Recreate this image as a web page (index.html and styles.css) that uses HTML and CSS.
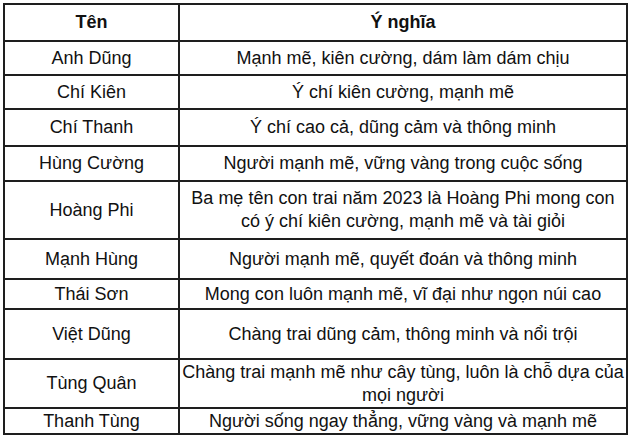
FILE: index.html
```html
<!DOCTYPE html>
<html lang="vi">
<head>
<meta charset="utf-8">
<link rel="stylesheet" href="styles.css">
</head>
<body>
<table class="names">
  <colgroup><col class="c-name"><col class="c-mean"></colgroup>
  <thead>
    <tr class="h37"><th>Tên</th><th>Ý nghĩa</th></tr>
  </thead>
  <tbody>
    <tr class="h34"><td>Anh Dũng</td><td>Mạnh mẽ, kiên cường, dám làm dám chịu</td></tr>
    <tr class="h34"><td>Chí Kiên</td><td>Ý chí kiên cường, mạnh mẽ</td></tr>
    <tr class="h37"><td>Chí Thanh</td><td>Ý chí cao cả, dũng cảm và thông minh</td></tr>
    <tr class="h35"><td>Hùng Cường</td><td>Người mạnh mẽ, vững vàng trong cuộc sống</td></tr>
    <tr class="h58"><td>Hoàng Phi</td><td>Ba mẹ tên con trai năm 2023 là Hoàng Phi mong con<br>có ý chí kiên cường, mạnh mẽ và tài giỏi</td></tr>
    <tr class="h40"><td>Mạnh Hùng</td><td>Người mạnh mẽ, quyết đoán và thông minh</td></tr>
    <tr class="h30"><td>Thái Sơn</td><td>Mong con luôn mạnh mẽ, vĩ đại như ngọn núi cao</td></tr>
    <tr class="h50"><td>Việt Dũng</td><td>Chàng trai dũng cảm, thông minh và nổi trội</td></tr>
    <tr class="h49"><td>Tùng Quân</td><td>Chàng trai mạnh mẽ như cây tùng, luôn là chỗ dựa của<br>mọi người</td></tr>
    <tr class="h26"><td>Thanh Tùng</td><td>Người sống ngay thẳng, vững vàng và mạnh mẽ</td></tr>
  </tbody>
</table>
</body>
</html>
```

FILE: styles.css
```css
html, body {
  margin: 0;
  padding: 0;
  background: #ffffff;
}
body {
  padding: 3px 0 0 3px;
  font-family: "Liberation Sans", Arial, sans-serif;
  font-size: 18px;
  color: #111111;
}
.names {
  border-collapse: collapse;
  width: 625px;
  table-layout: fixed;
}
.c-name { width: 175px; }
.names th, .names td {
  border: 2px solid #1e1e1e;
  text-align: center;
  vertical-align: middle;
  padding: 0;
  line-height: 23px;
  white-space: nowrap;
}
.names th { font-weight: bold; }
.h26 { height: 26px; }
.h30 { height: 30px; }
.h34 { height: 34px; }
.h35 { height: 35px; }
.h37 { height: 37px; }
.h40 { height: 40px; }
.h49 { height: 49px; }
.h50 { height: 50px; }
.h58 { height: 58px; }
```
